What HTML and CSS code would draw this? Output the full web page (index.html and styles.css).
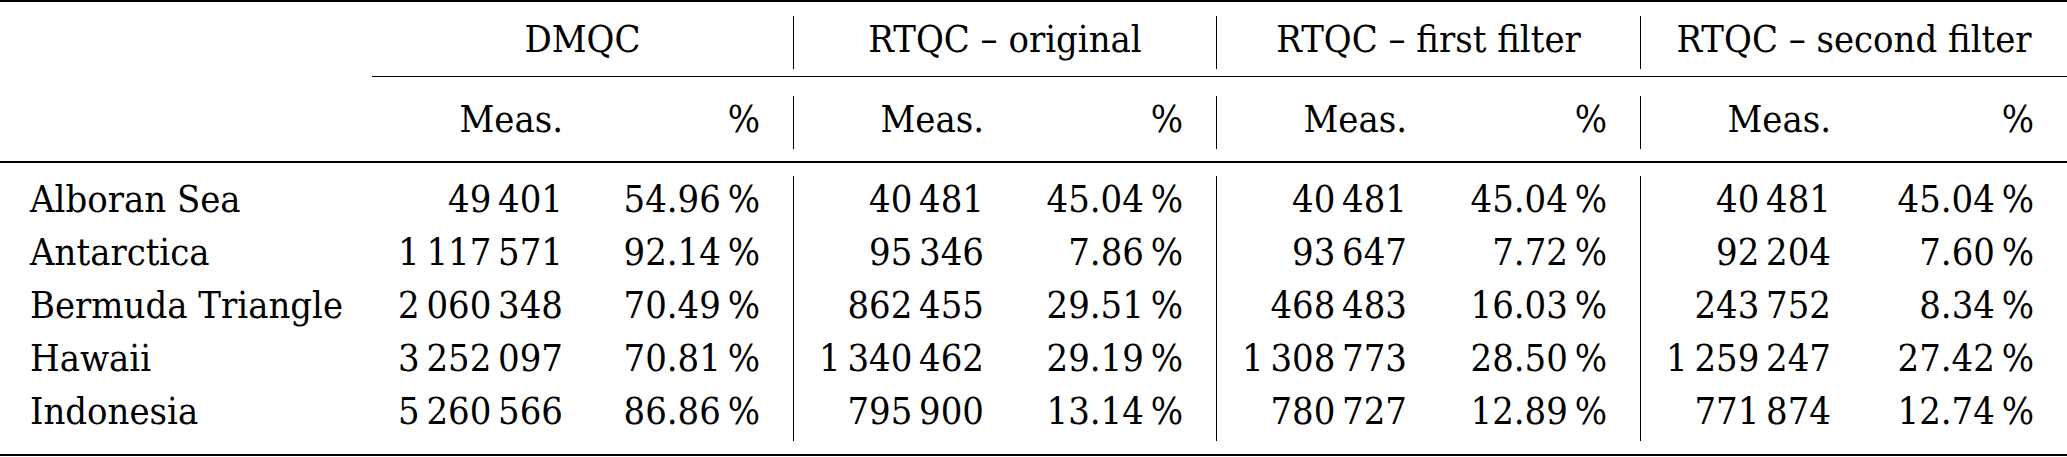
FILE: index.html
```html
<!DOCTYPE html>
<html lang="en">
<head>
    <meta charset="UTF-8">
    <meta name="viewport" content="width=device-width, initial-scale=1.0">
    <title>QC comparison</title>
    <link rel="stylesheet" href="styles.css">
</head>
<body>
    <table class="stats">
        <colgroup>
            <col class="c-stub">
            <col class="c-meas"><col class="c-pct1">
            <col class="c-meas"><col class="c-pct2">
            <col class="c-meas"><col class="c-pct3">
            <col class="c-meas"><col class="c-pct4">
        </colgroup>
        <thead>
            <tr class="space space-top">
                <td colspan="9"><div class="rule"></div></td>
            </tr>
            <tr class="row">
                <th></th>
                <th colspan="2" class="title">DMQC</th>
                <th colspan="2" class="title group">RTQC – original</th>
                <th colspan="2" class="title group">RTQC – first filter</th>
                <th colspan="2" class="title group">RTQC – second filter</th>
            </tr>
            <tr class="space space-cmid">
                <td></td>
                <td colspan="8"><div class="rule light"></div></td>
            </tr>
            <tr class="row">
                <th></th>
                <th class="num">Meas.</th><th class="pct">%</th>
                <th class="num group">Meas.</th><th class="pct">%</th>
                <th class="num group">Meas.</th><th class="pct">%</th>
                <th class="num group">Meas.</th><th class="pct">%</th>
            </tr>
            <tr class="space space-mid">
                <td colspan="9"><div class="rule"></div></td>
            </tr>
        </thead>
        <tbody>
            <tr class="row">
                <td class="name">Alboran Sea</td>
                <td class="num">49&thinsp;401</td><td class="pct">54.96&thinsp;%</td>
                <td class="num group">40&thinsp;481</td><td class="pct">45.04&thinsp;%</td>
                <td class="num group">40&thinsp;481</td><td class="pct">45.04&thinsp;%</td>
                <td class="num group">40&thinsp;481</td><td class="pct">45.04&thinsp;%</td>
            </tr>
            <tr class="row">
                <td class="name">Antarctica</td>
                <td class="num">1&thinsp;117&thinsp;571</td><td class="pct">92.14&thinsp;%</td>
                <td class="num group">95&thinsp;346</td><td class="pct">7.86&thinsp;%</td>
                <td class="num group">93&thinsp;647</td><td class="pct">7.72&thinsp;%</td>
                <td class="num group">92&thinsp;204</td><td class="pct">7.60&thinsp;%</td>
            </tr>
            <tr class="row">
                <td class="name">Bermuda Triangle</td>
                <td class="num">2&thinsp;060&thinsp;348</td><td class="pct">70.49&thinsp;%</td>
                <td class="num group">862&thinsp;455</td><td class="pct">29.51&thinsp;%</td>
                <td class="num group">468&thinsp;483</td><td class="pct">16.03&thinsp;%</td>
                <td class="num group">243&thinsp;752</td><td class="pct">8.34&thinsp;%</td>
            </tr>
            <tr class="row">
                <td class="name">Hawaii</td>
                <td class="num">3&thinsp;252&thinsp;097</td><td class="pct">70.81&thinsp;%</td>
                <td class="num group">1&thinsp;340&thinsp;462</td><td class="pct">29.19&thinsp;%</td>
                <td class="num group">1&thinsp;308&thinsp;773</td><td class="pct">28.50&thinsp;%</td>
                <td class="num group">1&thinsp;259&thinsp;247</td><td class="pct">27.42&thinsp;%</td>
            </tr>
            <tr class="row">
                <td class="name">Indonesia</td>
                <td class="num">5&thinsp;260&thinsp;566</td><td class="pct">86.86&thinsp;%</td>
                <td class="num group">795&thinsp;900</td><td class="pct">13.14&thinsp;%</td>
                <td class="num group">780&thinsp;727</td><td class="pct">12.89&thinsp;%</td>
                <td class="num group">771&thinsp;874</td><td class="pct">12.74&thinsp;%</td>
            </tr>
        </tbody>
        <tfoot>
            <tr class="space space-bottom">
                <td colspan="9"><div class="rule"></div></td>
            </tr>
        </tfoot>
    </table>
</body>
</html>
```

FILE: styles.css
```css
html, body {
    margin: 0;
    background-color: #fff;
}

body {
    color: #000;
}

.stats {
    width: 2067px;
    table-layout: fixed;
    border-collapse: separate;
    border-spacing: 0;
}

.stats th,
.stats td {
    font-family: "DejaVu Serif", serif;
    font-stretch: condensed;
    font-size: 37.8px;
    font-weight: normal;
    color: #000;
    padding: 0;
    white-space: nowrap;
}

.c-stub { width: 372px; }
.c-meas { width: 200px; }
.c-pct1 { width: 221px; }
.c-pct2 { width: 223px; }
.c-pct3 { width: 224px; }
.c-pct4 { width: 227px; }

/* text rows: 52.9px pitch, baseline 37px below the top like a LaTeX strut */
.stats .row th,
.stats .row td {
    line-height: 47.8px;
    padding-bottom: 5.1px;
}

.stats .title {
    text-align: center;
}

.stats .name {
    text-align: left;
    padding-left: 30px;
}

.stats .num {
    text-align: right;
    padding-right: 9px;
}

.stats .pct {
    text-align: right;
    padding-right: 33px;
}

.stats .group {
    border-left: 1px solid #000;
}

/* spacer rows holding the booktabs-style rules */
.stats .space td {
    line-height: 0;
}

.rule {
    height: 2px;
    background-color: #000;
}

.rule.light {
    height: 1px;
}

.stats .space-top td {
    padding-bottom: 14.3px;
}

.stats .space-cmid td {
    padding: 6.8px 0 19.3px;
}

.stats .space-mid td {
    padding: 12.3px 0 13px;
}

.stats .space-bottom td {
    padding-top: 13px;
}
```
